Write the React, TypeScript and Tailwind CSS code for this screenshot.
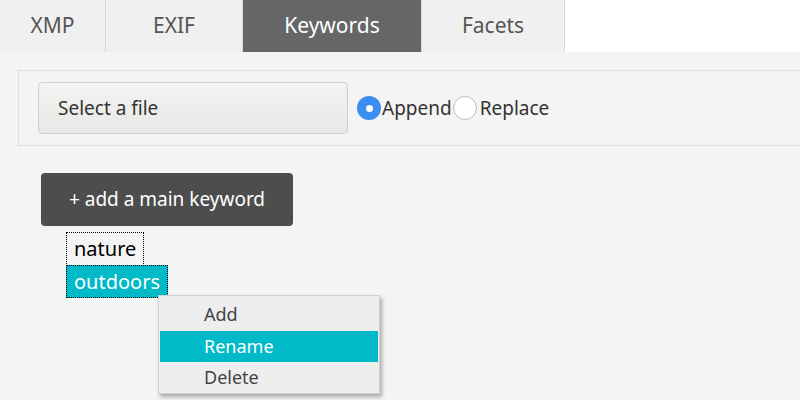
export default function App() {
  const tabs = [
    { label: "XMP", w: "w-[106px]" },
    { label: "EXIF", w: "w-[137px]" },
    { label: "Keywords", w: "w-[179px]", active: true },
    { label: "Facets", w: "w-[143px]" },
  ];
  return (
    <div className="w-[800px] h-[400px] overflow-hidden bg-white font-['Liberation_Sans',sans-serif]">
      <div className="flex h-[52px]">
        {tabs.map((t) => (
          <div
            key={t.label}
            className={`${t.w} flex items-center justify-center text-[21px] border-r border-[#d8d8d8] ${
              t.active ? "bg-[#666666] text-white" : "bg-[#f0f0f0] text-[#555]"
            }`}
          >
            {t.label}
          </div>
        ))}
      </div>
      <div className="h-[348px] bg-[#f4f4f4] pt-[18px] pl-[18px]">
        <div className="h-[76px] border border-[#dedede] border-r-0 flex items-center pl-[19px]">
          <div className="w-[310px] h-[52px] rounded border border-[#cfcfcf] bg-gradient-to-b from-[#f3f3f1] to-[#e8e8e6] flex items-center pl-[19px] text-[19px] text-[#333]">
            Select a file
          </div>
          <div className="flex items-center ml-[9px] text-[19px] text-[#333]">
            <span className="w-[24px] h-[24px] rounded-full bg-[#3b8ef0] flex items-center justify-center">
              <span className="w-[7px] h-[7px] rounded-full bg-white" />
            </span>
            <span className="ml-[1px]">Append</span>
            <span className="ml-[1px] w-[24px] h-[24px] rounded-full bg-white border border-[#bbb]" />
            <span className="ml-[3px]">Replace</span>
          </div>
        </div>
        <div className="font-['DejaVu_Sans',sans-serif] pl-[23px] pt-[27px] relative">
          <div className="w-[252px] h-[53px] rounded bg-[#4d4d4d] text-white text-[19px] flex items-center justify-center">
            + add a main keyword
          </div>
          <div className="ml-[25px] mt-[6px] flex flex-col items-start">
            <div className="border border-dotted border-black px-[7px] h-[34px] flex items-center text-[20px] text-black">
              nature
            </div>
            <div className="border border-dotted border-black px-[7px] h-[33px] flex items-center text-[20px] text-white bg-[#00bac7] -mt-[1px]">
              outdoors
            </div>
          </div>
          <div className="absolute left-[140px] top-[149px] w-[222px] bg-[#eeeeee] border border-[#d0d0d0] shadow-[2px_3px_4px_rgba(0,0,0,0.3)] text-[18px] text-[#444] py-[1px]">
            <div className="h-[34px] pl-[45px] flex items-center">Add</div>
            <div className="h-[31px] mx-[1px] pl-[44px] flex items-center bg-[#00bac7] text-white">Rename</div>
            <div className="h-[30px] pl-[45px] flex items-center">Delete</div>
          </div>
        </div>
      </div>
    </div>
  );
}
